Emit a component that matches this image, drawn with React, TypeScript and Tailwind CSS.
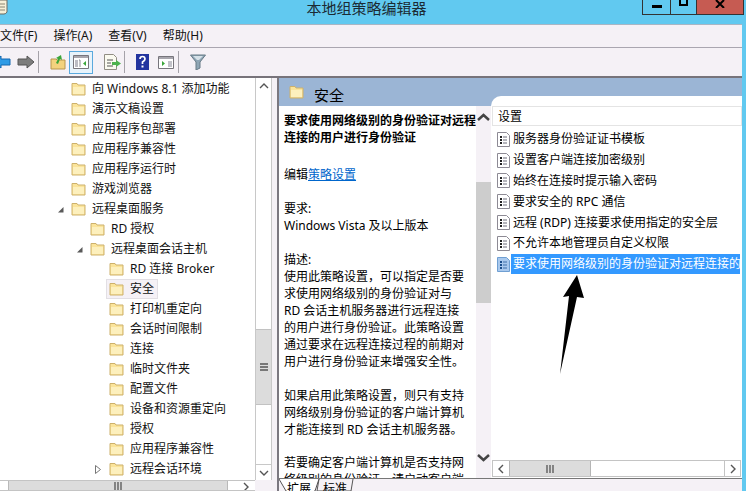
const cjk = "font-['Noto_Sans','Noto_Sans_CJK_SC',sans-serif]";

const treeRows = [
    { label: "向 Windows 8.1 添加功能", level: 0 },
    { label: "演示文稿设置", level: 0 },
    { label: "应用程序包部署", level: 0 },
    { label: "应用程序兼容性", level: 0 },
    { label: "应用程序运行时", level: 0 },
    { label: "游戏浏览器", level: 0 },
    { label: "远程桌面服务", level: 0, open: true },
    { label: "RD 授权", level: 1 },
    { label: "远程桌面会话主机", level: 1, open: true },
    { label: "RD 连接 Broker", level: 2 },
    { label: "安全", level: 2, active: true },
    { label: "打印机重定向", level: 2 },
    { label: "会话时间限制", level: 2 },
    { label: "连接", level: 2 },
    { label: "临时文件夹", level: 2 },
    { label: "配置文件", level: 2 },
    { label: "设备和资源重定向", level: 2 },
    { label: "授权", level: 2 },
    { label: "应用程序兼容性", level: 2 },
    { label: "远程会话环境", level: 2, closed: true },
];

const settings = [
    "服务器身份验证证书模板",
    "设置客户端连接加密级别",
    "始终在连接时提示输入密码",
    "要求安全的 RPC 通信",
    "远程 (RDP) 连接要求使用指定的安全层",
    "不允许本地管理员自定义权限",
];

function Folder({ className = "" }: { className?: string }) {
    return (
        <svg className={className} width="15" height="14" viewBox="0 0 15 14">
            <path d="M1 3V1.5h5L7 3h7v10H1z" fill="#fbe49a" stroke="#cdb16c" />
            <path d="M2 5h11v7H2z" fill="#fdf0bd" />
        </svg>
    );
}

function PolicyIcon({ selected }: { selected?: boolean }) {
    return (
        <svg width="13" height="15" viewBox="0 0 13 15" className="shrink-0">
            <path d="M.5.5h9l3 3v11H.5z" fill={selected ? "#a9c9ee" : "#fff"} stroke={selected ? "#6f9fd2" : "#8d8a94"} />
            <path d="M3 4h2v2H3zM3 7h2v2H3zM3 10h2v2H3z" fill={selected ? "#1d4f8c" : "#222"} />
            <path d="M6 5h4M6 8h4M6 11h4" stroke={selected ? "#3f6fa8" : "#6a6a78"} />
        </svg>
    );
}

function Chevron({ dir }: { dir: "up" | "down" | "left" | "right" }) {
    const d = { up: "M2 8l4-4 4 4", down: "M2 4l4 4 4-4", left: "M8 2L4 6l4 4", right: "M4 2l4 4-4 4" }[dir];
    return (
        <svg width="12" height="12" viewBox="0 0 12 12">
            <path d={d} fill="none" stroke="#555" strokeWidth="1.4" />
        </svg>
    );
}

function Grip({ vertical }: { vertical?: boolean }) {
    return (
        <svg width="8" height="8" viewBox="0 0 8 8" className={vertical ? "rotate-90" : ""}>
            <path d="M1 0v8M4 0v8M7 0v8" stroke="#555" strokeWidth="1.3" />
        </svg>
    );
}

function TreeRow({ row }: { row: (typeof treeRows)[number] }) {
    const left = ["pl-[70px]", "pl-[89px]", "pl-[108px]"][row.level];
    return (
        <div className={`h-5 flex items-center relative ${left}`}>
            {row.open && (
                <svg className="absolute -ml-[13px]" width="7" height="7" viewBox="0 0 7 7">
                    <path d="M6.5 1v5.5H1z" fill="#595959" />
                </svg>
            )}
            {row.closed && (
                <svg className="absolute -ml-[13px]" width="6" height="9" viewBox="0 0 6 9">
                    <path d="M.5.5l5 4-5 4z" fill="#fff" stroke="#777" />
                </svg>
            )}
            <div className={`flex items-center h-5 pl-[1px] pr-[3px] ${row.active ? "bg-[#f5f1f6] border border-[#e2dfe4] -ml-[2px] pl-[2px]" : ""}`}>
                <Folder />
                <span className="ml-[6px] text-xs whitespace-nowrap text-[#111]">{row.label}</span>
            </div>
        </div>
    );
}

function Toolbar() {
    return (
        <div className="h-[29px] flex items-center border-t border-[#aaa6b0] bg-[#f5f1f6] shrink-0">
            <svg width="36" height="16" viewBox="0 0 36 16" className="shrink-0">
                <path d="M-6 8l7-6v3h9v6H1v3z" fill="#2e9be6" stroke="#1568b0" />
                <path d="M34 8l-7-6v3h-9v6h9v3z" fill="#7d7d7d" stroke="#555" />
            </svg>
            <div className="w-[1px] h-[22px] bg-[#a5a2a9] ml-[2px]" />
            <svg width="16" height="16" viewBox="0 0 16 16" className="ml-[11px] shrink-0">
                <path d="M1 5h5l1 1h8v9H1z" fill="#f3d27e" stroke="#b9964e" />
                <path d="M6 9l2-4-2-1 5-3 1 5-2-1-2 5z" fill="#3aa63a" />
            </svg>
            <div className="ml-[3px] w-[24px] h-[23px] border border-[#5aa9dd] bg-[#e8f3fb] flex items-center justify-center">
                <svg width="16" height="14" viewBox="0 0 16 14">
                    <path d="M.5.5h15v13H.5z" fill="#fff" stroke="#77757c" />
                    <path d="M1 1h14v2H1z" fill="#a8a6ad" />
                    <path d="M2 5h3v7H2z" fill="#bcbcc4" />
                    <path d="M7 5v7M6 5h1" stroke="#8a8a92" />
                    <path d="M13 6v5l-3-2.500z" fill="#3aa63a" />
                </svg>
            </div>
            <svg width="17" height="16" viewBox="0 0 17 16" className="ml-[11px] shrink-0">
                <path d="M.5.5h9l3 3v12H.5z" fill="#fbfaf0" stroke="#918d83" />
                <path d="M3 6h6M3 9h4M3 12h6" stroke="#555" />
                <path d="M8 8h4V6l5 3.500-5 3.500v-2H8z" fill="#4db24d" />
            </svg>
            <div className="w-[1px] h-[22px] bg-[#a5a2a9] ml-[3px]" />
            <svg width="13" height="16" viewBox="0 0 13 16" className="ml-[11px] shrink-0">
                <path d="M0 0h13v16H0z" fill="#23349f" />
                <path d="M4 5q0-2.500 2.500-2.500T9 5q0 1.500-2.500 3v2" fill="none" stroke="#fff" strokeWidth="1.700" />
                <path d="M5.500 11.500h2v2h-2z" fill="#fff" />
            </svg>
            <svg width="16" height="13" viewBox="0 0 16 13" className="ml-[9px] shrink-0">
                <path d="M.5.5h15v12H.5z" fill="#fff" stroke="#77757c" />
                <path d="M1 1h14v2H1z" fill="#a8a6ad" />
                <path d="M4 5v5l3-2.500z" fill="#3aa63a" />
                <path d="M10 5h4v6h-4z" fill="#c2c2c9" />
            </svg>
            <div className="w-[1px] h-[22px] bg-[#a5a2a9] ml-[4px]" />
            <svg width="16" height="16" viewBox="0 0 16 16" className="ml-[11px] shrink-0">
                <path d="M.5 1h15L10 8v6l-4 2V8z" fill="#8fa6b5" stroke="#667a86" />
                <path d="M3 2h10L9 6H7z" fill="#d6e2e9" />
            </svg>
        </div>
    );
}

function TreePane() {
    return (
        <div className="w-[272px] shrink-0 flex flex-col">
            <div className="flex h-[402px]">
                <div className="flex-1 bg-white overflow-hidden pt-[1px]">
                    {treeRows.map((row) => (
                        <TreeRow key={row.label + row.level} row={row} />
                    ))}
                </div>
                <div className="w-[17px] bg-white border-x border-[#c8c8c8] flex flex-col">
                    <div className="h-[16px] flex items-center justify-center"><Chevron dir="up" /></div>
                    <div className="flex-1 flex flex-col pt-[235px]">
                        <div className="h-[76px] bg-[#dcdcdc] border-y border-[#c2c2c2] flex items-center justify-center">
                            <Grip vertical />
                        </div>
                    </div>
                    <div className="h-[16px] flex items-center justify-center border-t border-[#c8c8c8]"><Chevron dir="down" /></div>
                </div>
            </div>
            <div className="h-[11px] flex border-y border-[#c4c4c4] -ml-[1px] w-[256px] bg-white overflow-hidden">
                <div className="w-[9px] shrink-0" />
                <div className="w-[220px] bg-[#dcdcdc] border-x border-[#b9b9b9] flex justify-center pt-[1px]"><Grip /></div>
                <div className="flex-1 flex justify-end pr-[3px]"><Chevron dir="right" /></div>
            </div>
        </div>
    );
}

function DescriptionPane() {
    return (
        <div className="w-[197px] shrink-0 pl-[5px] pt-[6px] text-xs leading-[17px] text-black overflow-hidden whitespace-nowrap">
            <div className="font-bold">
                要求使用网络级别的身份验证对远程
                <br />
                连接的用户进行身份验证
            </div>
            <div className="mt-[20px]">
                编辑<span className="text-[#0066cc] underline">策略设置</span>
            </div>
            <div className="mt-[17px]">要求:</div>
            <div>Windows Vista 及以上版本</div>
            <div className="mt-[17px]">描述:</div>
            <div>
                使用此策略设置，可以指定是否要
                <br />
                求使用网络级别的身份验证对与
                <br />
                RD 会话主机服务器进行远程连接
                <br />
                的用户进行身份验证。此策略设置
                <br />
                通过要求在远程连接过程的前期对
                <br />
                用户进行身份验证来增强安全性。
            </div>
            <div className="mt-[17px]">
                如果启用此策略设置，则只有支持
                <br />
                网络级别身份验证的客户端计算机
                <br />
                才能连接到 RD 会话主机服务器。
            </div>
            <div className="mt-[16px]">
                若要确定客户端计算机是否支持网
                <br />
                络级别的身份验证，请启动客户端
            </div>
        </div>
    );
}

function SettingsPane() {
    return (
        <div className="flex-1 min-w-0 flex flex-col relative">
            <div className="h-[20px] ml-[1px] border border-[#e4e4e4] flex items-center pl-[5px] pt-[1px] text-xs text-black">设置</div>
            <div className="flex-1 pt-[3px]">
                {settings.map((s) => (
                    <div key={s} className="h-[20.8px] flex items-center pl-[6px] gap-[3px] text-xs text-black whitespace-nowrap">
                        <PolicyIcon />
                        <span>{s}</span>
                    </div>
                ))}
                <div className="h-[20.8px] flex items-center pl-[6px] gap-[1px] text-xs whitespace-nowrap">
                    <PolicyIcon selected />
                    <span className="flex-1 min-w-0 overflow-hidden bg-[#3399ff] text-white h-[20px] leading-[20px] pl-[2px] pr-[1px] mr-[2px]">
                        要求使用网络级别的身份验证对远程连接的用户进行身份验证
                    </span>
                </div>
            </div>
            <div className="h-[17px] ml-[1px] mr-[1px] flex border border-[#c4c4c4] bg-white mb-[1px]">
                <div className="w-[16px] flex items-center justify-center"><Chevron dir="left" /></div>
                <div className="w-[82px] bg-[#dcdcdc] border-x border-[#b5b5b5] flex items-center justify-center"><Grip /></div>
                <div className="flex-1" />
                <div className="w-[16px] border-l border-[#c4c4c4] flex items-center justify-center"><Chevron dir="right" /></div>
            </div>
            {/* arrow drawn on top of the list */}
            <svg className="absolute left-[64px] top-[166px]" width="32" height="104" viewBox="0 0 32 104">
                <path d="M22 3L8 25l6-1L5 102l17-77 7 1z" fill="#000" />
            </svg>
        </div>
    );
}

export default function App() {
    return (
        <div className={`w-[746px] h-[491px] overflow-hidden flex flex-col bg-[#61c9f0] ${cjk}`}>
            {/* Title bar */}
            <div className="h-6 flex shrink-0">
                <svg width="9" height="15" viewBox="0 0 9 15" className="shrink-0">
                    <path d="M-4 0h11v12q-1 2-3 2H-4z" fill="#f6f0d8" stroke="#6d6a60" />
                    <path d="M-2 4h7M-2 7h7M-2 10h7" stroke="#8a8674" />
                </svg>
                <div className="flex-1 text-center text-[15px] leading-[17px] text-[#1c2b33] pl-[82px] whitespace-nowrap">本地组策略编辑器</div>
                <div className="h-[15px] flex border border-t-0 border-[#333] mr-[2px] shrink-0">
                    <div className="w-[28px] border-r border-[#333] flex justify-center pt-[5px]">
                        <div className="w-[10px] h-[3px] bg-black" />
                    </div>
                    <div className="w-[26px] border-r border-[#333] flex justify-center">
                        <div className="w-[9px] h-[6px] border-2 border-t-0 border-black" />
                    </div>
                    <div className="w-[46px] bg-[#c65b52] flex justify-center">
                        <svg width="10" height="8" viewBox="0 0 10 8">
                            <path d="M1 0l8 8M9 0l-8 8" stroke="#000" strokeWidth="2" />
                        </svg>
                    </div>
                </div>
            </div>

            {/* Client area */}
            <div className="flex-1 min-h-0 mr-[4px] flex flex-col bg-[#f5f1f6]">
                <div className="h-[23px] flex items-center gap-4 text-xs text-[#111] border-t border-[#a9b6c4] shrink-0">
                    <span>文件(F)</span>
                    <span>操作(A)</span>
                    <span>查看(V)</span>
                    <span>帮助(H)</span>
                </div>
                <Toolbar />
                <div className="flex-1 min-h-0 flex border-t-2 border-[#77737a]">
                    <TreePane />
                    <div className="w-[5px] shrink-0" />
                    <div className="flex-1 min-w-0 flex flex-col border-l-2 border-[#7b7880]">
                        <div className="h-[28px] bg-[#9bb5d5] flex items-start pl-[10px] pt-[7px] shrink-0">
                            <Folder />
                            <span className="ml-[10px] text-[15px] leading-[20px] text-black">安全</span>
                        </div>
                        <div className="h-[373px] flex bg-white border-b border-[#777] shrink-0">
                            <DescriptionPane />
                            <div className="w-[15px] bg-[#f5f1f6] shrink-0 flex flex-col">
                                <div className="h-[30px] pt-[7px] flex justify-center"><svg width="13" height="9" viewBox="0 0 13 9"><path d="M1 7l5.500-5L12 7" fill="none" stroke="#444" strokeWidth="2.500" /></svg></div>
                                <div className="h-[121px] bg-[#cdcdcd] mt-[46px] mb-auto" />
                                <div className="h-[30px] flex justify-center pt-[5px]"><svg width="13" height="9" viewBox="0 0 13 9"><path d="M1 2l5.500 5L12 2" fill="none" stroke="#444" strokeWidth="2.500" /></svg></div>
                            </div>
                            <div className="flex-1 min-w-0 flex flex-col -mt-[10px] bg-white rounded-tl-[10px]">
                                <div className="h-[10px]" />
                                <SettingsPane />
                            </div>
                        </div>
                        <div className="relative h-[12px] overflow-hidden pl-[8px] pt-[1px] flex gap-[12px] text-xs leading-[17px] text-black whitespace-nowrap">
                            <svg className="absolute left-0 top-0" width="90" height="12" viewBox="0 0 90 12">
                                <path d="M0 0l7 12h29l4-12M40 0l-2 12h34l2-12" fill="none" stroke="#555" />
                                <path d="M1 0l7 12h27l4-12z" fill="#fff" />
                            </svg>
                            <span className="relative">扩展</span>
                            <span className="relative">标准</span>
                        </div>
                    </div>
                </div>
            </div>
        </div>
    );
}
